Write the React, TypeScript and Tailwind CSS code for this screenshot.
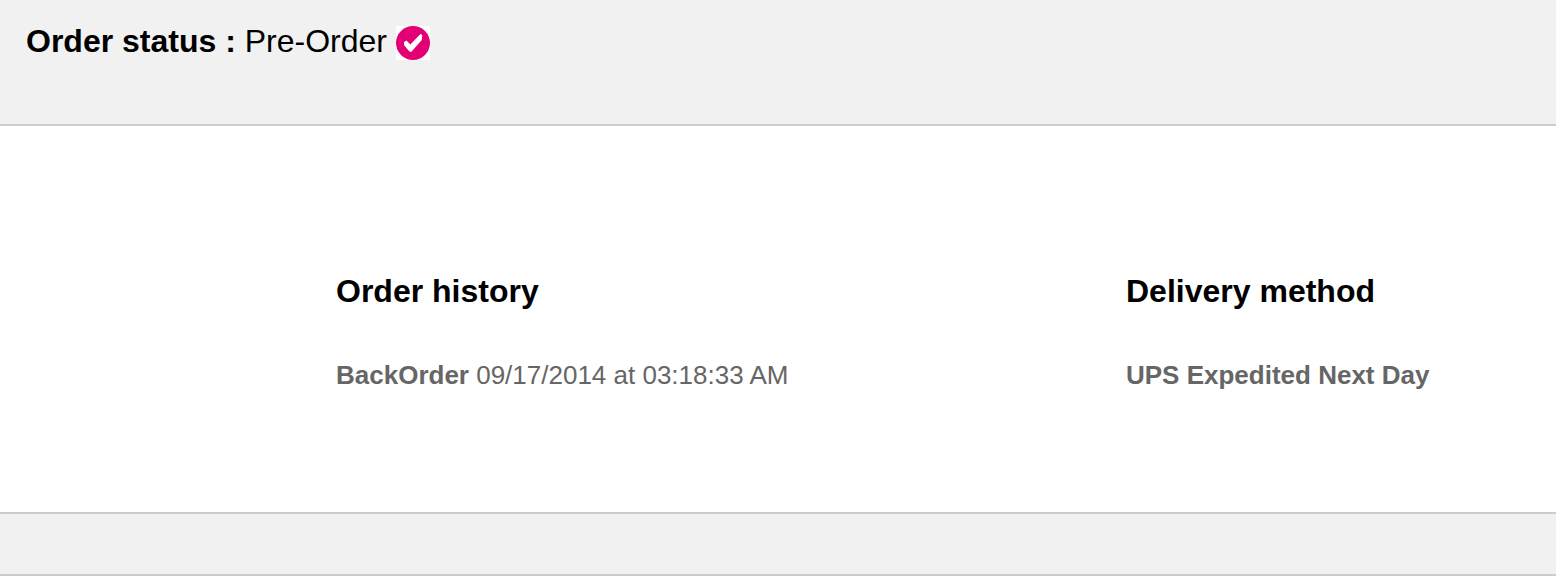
export default function App() {
  return (
    <main className="bg-white font-['Liberation_Sans',Arial,sans-serif] text-black">
      {/* Status bar */}
      <header className="border-b-2 border-[#cccccc] bg-[#f1f1f1] px-[26px] pt-[22px] pb-16">
        <p className="flex items-end gap-[9px] text-[32px] leading-[38px]">
          <span>
            <strong className="font-bold">Order status :</strong> Pre-Order
          </span>
          <StatusIcon />
        </p>
      </header>

      {/* Order details */}
      <div className="grid grid-cols-[790fr_430fr] border-b-2 border-[#cccccc] pt-[146px] pb-[120px] pl-[336px]">
        <section>
          <h2 className="text-[32px] leading-[38px] font-bold">Order history</h2>
          <p className="mt-12 text-[26px] leading-[34px] text-[#666666]">
            <strong className="font-bold">BackOrder</strong> 09/17/2014 at 03:18:33 AM
          </p>
        </section>
        <section>
          <h2 className="text-[32px] leading-[38px] font-bold">Delivery method</h2>
          <p className="mt-12 text-[26px] leading-[34px] font-bold text-[#666666]">
            UPS Expedited Next Day
          </p>
        </section>
      </div>

      <footer className="border-b-2 border-[#cccccc] bg-[#f1f1f1] py-[30px]" />
    </main>
  );
}

function StatusIcon() {
  return (
    <svg viewBox="0 0 34 34" className="h-[34px] w-[34px]" role="img" aria-label="Confirmed">
      <rect width="34" height="34" fill="#ffffff" />
      <circle cx="17" cy="17" r="17" fill="#e20074" />
      <path
        d="M8 16 L10.5 14.5 L14.3 18.5 L24.5 8 L26.2 9 L25.8 14 L15.2 26 L13.2 25.2 L8 19 Z"
        fill="#ffffff"
      />
    </svg>
  );
}
